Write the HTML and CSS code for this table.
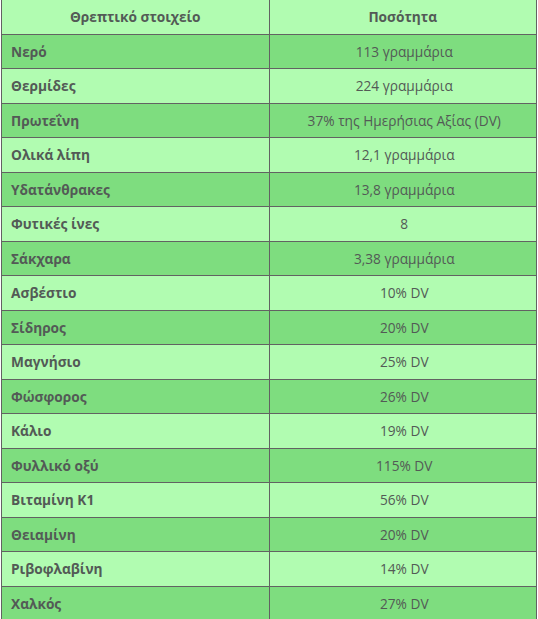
FILE: index.html
```html
<!DOCTYPE html>
<html lang="el">
<head>
<meta charset="utf-8">
<title>Θρεπτικά στοιχεία</title>
<link rel="stylesheet" href="styles.css">
</head>
<body>
<table class="nutri">
  <thead>
    <tr><th>Θρεπτικό στοιχείο</th><th>Ποσότητα</th></tr>
  </thead>
  <tbody>
    <tr class="dark"><td class="name">Νερό</td><td class="val">113 γραμμάρια</td></tr>
    <tr class="light"><td class="name">Θερμίδες</td><td class="val">224 γραμμάρια</td></tr>
    <tr class="dark"><td class="name">Πρωτεΐνη</td><td class="val">37% της Ημερήσιας Αξίας (DV)</td></tr>
    <tr class="light"><td class="name">Ολικά λίπη</td><td class="val">12,1 γραμμάρια</td></tr>
    <tr class="dark"><td class="name">Υδατάνθρακες</td><td class="val">13,8 γραμμάρια</td></tr>
    <tr class="light"><td class="name">Φυτικές ίνες</td><td class="val">8</td></tr>
    <tr class="dark"><td class="name">Σάκχαρα</td><td class="val">3,38 γραμμάρια</td></tr>
    <tr class="light"><td class="name">Ασβέστιο</td><td class="val">10% DV</td></tr>
    <tr class="dark"><td class="name">Σίδηρος</td><td class="val">20% DV</td></tr>
    <tr class="light"><td class="name">Μαγνήσιο</td><td class="val">25% DV</td></tr>
    <tr class="dark"><td class="name">Φώσφορος</td><td class="val">26% DV</td></tr>
    <tr class="light"><td class="name">Κάλιο</td><td class="val">19% DV</td></tr>
    <tr class="dark"><td class="name">Φυλλικό οξύ</td><td class="val">115% DV</td></tr>
    <tr class="light"><td class="name">Βιταμίνη Κ1</td><td class="val">56% DV</td></tr>
    <tr class="dark"><td class="name">Θειαμίνη</td><td class="val">20% DV</td></tr>
    <tr class="light"><td class="name">Ριβοφλαβίνη</td><td class="val">14% DV</td></tr>
    <tr class="dark"><td class="name">Χαλκός</td><td class="val">27% DV</td></tr>
  </tbody>
</table>
</body>
</html>
```
FILE: styles.css
```css
html, body {
  margin: 0;
  padding: 0;
  background: #ffffff;
}
body {
  font-family: "Open Sans", "Noto Sans", sans-serif;
  font-size: 13.7px;
  line-height: 19.5px;
  color: #535a56;
}
.nutri {
  border-collapse: collapse;
  width: 536px;
  margin: -1px 0 0 1px;
  table-layout: fixed;
}
.nutri th,
.nutri td {
  border: 1px solid #626262;
  padding: 7px 9px;
}
.nutri th {
  background: #b1fcb1;
  font-weight: 700;
  text-align: center;
}
.nutri td.name {
  font-weight: 700;
  text-align: left;
}
.nutri td.val {
  text-align: center;
  padding-left: 12px;
}
.nutri tr.dark td {
  background: #7edd7f;
}
.nutri tr.light td {
  background: #b1fcb1;
}
```
